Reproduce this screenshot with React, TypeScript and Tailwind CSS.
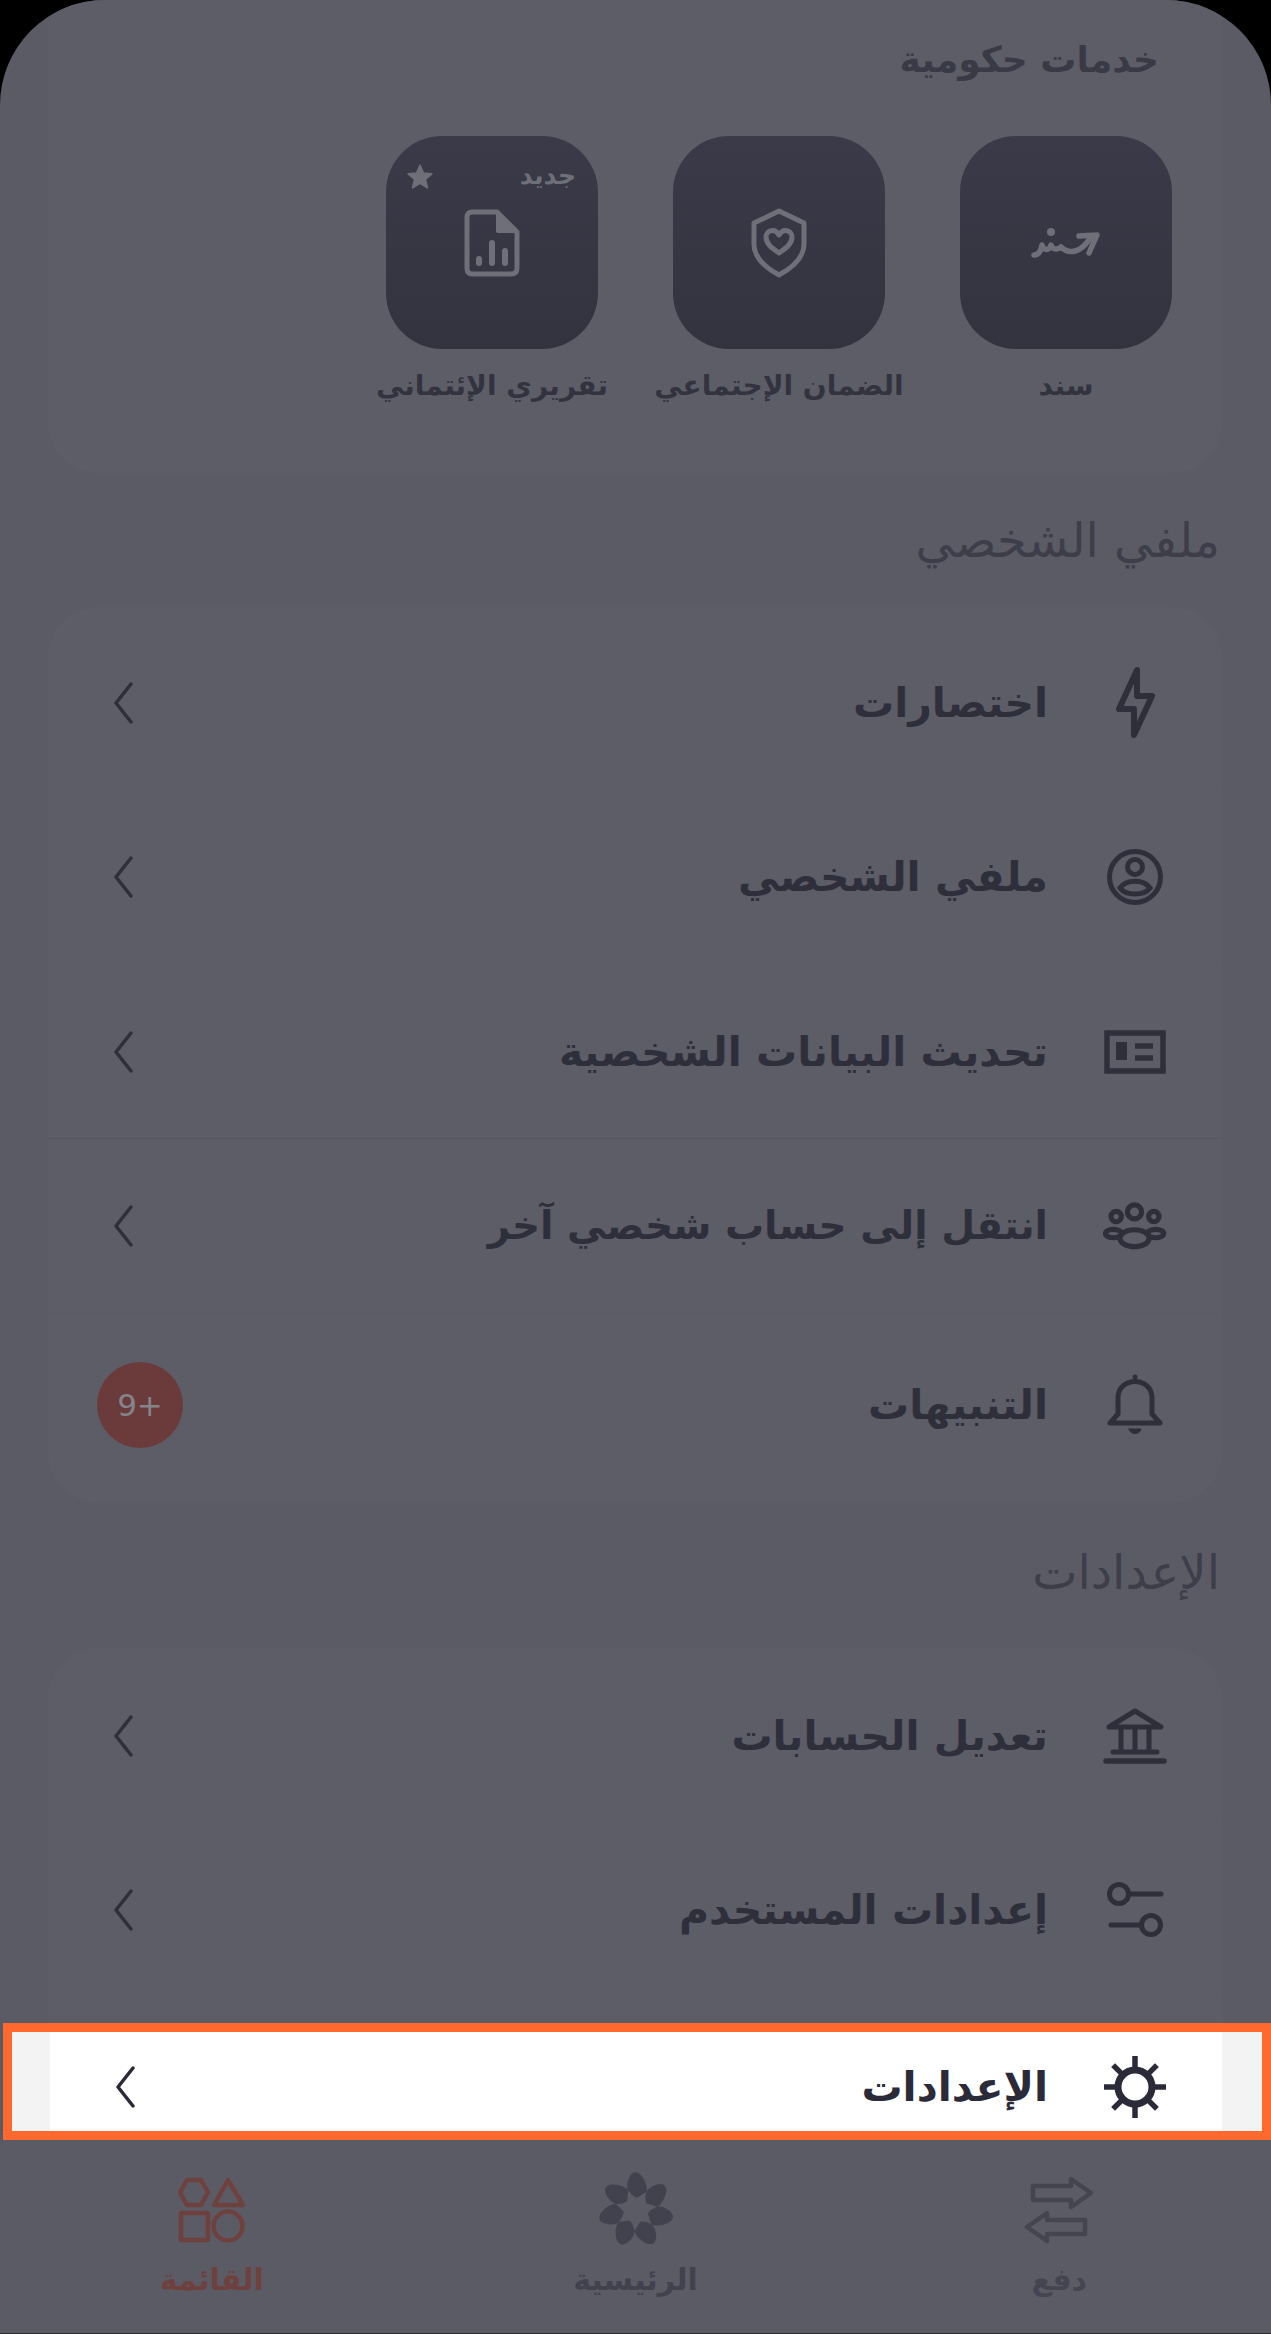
import React from "react";

const INK = "#2f2f3c";

function Bolt() {
  return (
    <svg width="41" height="73" viewBox="0 0 41 73" fill="none" stroke="currentColor" strokeWidth="6" strokeLinejoin="round" strokeLinecap="round">
      <path d="M22 4 L4 43 H19 V69 L37 30 H22 Z" />
    </svg>
  );
}
function Profile() {
  return (
    <svg width="58" height="58" viewBox="0 0 58 58" fill="none" stroke="currentColor" strokeWidth="5">
      <circle cx="29" cy="29" r="25.5" />
      <circle cx="29" cy="19" r="7.5" />
      <path d="M14 40 C20 31 38 31 44 40 C38 48 20 48 14 40 Z" />
    </svg>
  );
}
function IdCard() {
  return (
    <svg width="62" height="44" viewBox="0 0 62 44" fill="none" stroke="currentColor">
      <rect x="3" y="3" width="56" height="38" strokeWidth="5.5" />
      <rect x="12" y="12" width="11" height="18" fill="currentColor" stroke="none" />
      <path d="M31 16 H49 M31 28 H49" strokeWidth="5.5" />
    </svg>
  );
}
function People() {
  return (
    <svg width="68" height="50" viewBox="0 0 68 50" fill="none" stroke="currentColor" strokeWidth="5.5">
      <circle cx="33.5" cy="10" r="7.5" />
      <circle cx="14" cy="15" r="5.5" />
      <circle cx="54" cy="15" r="5.5" />
      <ellipse cx="11" cy="33" rx="8.5" ry="4.5" />
      <ellipse cx="56" cy="33" rx="8.5" ry="4.5" />
      <ellipse cx="33.5" cy="38" rx="15.5" ry="9" />
    </svg>
  );
}
function Bell() {
  return (
    <svg width="56" height="63" viewBox="0 0 56 63" fill="none" stroke="currentColor" strokeWidth="5" strokeLinejoin="round" strokeLinecap="round">
      <path d="M11 41 V25 C11 3 45 3 45 25 V41 L53 50 H3 Z" />
      <path d="M22 56 H34 C33 62 23 62 22 56 Z" fill="currentColor" strokeWidth="1" />
      <circle cx="28" cy="4" r="2.5" fill="currentColor" stroke="none" />
    </svg>
  );
}
function Bank() {
  return (
    <svg width="64" height="56" viewBox="0 0 64 56" fill="none" stroke="currentColor" strokeWidth="5" strokeLinejoin="round" strokeLinecap="round">
      <path d="M32 3 L58 19 H6 Z" />
      <path d="M18 22 V41 M32 22 V41 M46 22 V41" />
      <path d="M10 44 H54" />
      <path d="M3 53 H61" strokeWidth="5.5" />
    </svg>
  );
}
function Sliders() {
  return (
    <svg width="58" height="56" viewBox="0 0 58 56" fill="none" stroke="currentColor" strokeWidth="5" strokeLinecap="round">
      <circle cx="13" cy="12" r="9.5" />
      <path d="M23 12 H55" />
      <circle cx="45" cy="43" r="9.5" />
      <path d="M5 43 H35" />
    </svg>
  );
}
function Gear() {
  const spokes = [0, 45, 90, 135, 180, 225, 270, 315];
  return (
    <svg width="64" height="64" viewBox="0 0 64 64" fill="none" stroke="currentColor">
      <circle cx="32" cy="32" r="17" strokeWidth="7" />
      {spokes.map((a) => (
        <path key={a} d="M32 17 V1" strokeWidth="5.5" transform={`rotate(${a} 32 32)`} />
      ))}
    </svg>
  );
}
function Chevron() {
  return (
    <svg width="20" height="42" viewBox="0 0 20 42" fill="none" stroke="currentColor" strokeWidth="3.5" strokeLinecap="round" strokeLinejoin="round">
      <path d="M18 2 L3 21 L18 40" />
    </svg>
  );
}
function DocChart() {
  return (
    <svg width="56" height="68" viewBox="0 0 56 68" fill="none" stroke="currentColor" strokeWidth="5" strokeLinejoin="round" strokeLinecap="round">
      <path d="M8 3 H33 L53 23 V59 C53 63 51 65 47 65 H8 C5 65 3 63 3 59 V8 C3 5 5 3 8 3 Z" />
      <path d="M34 4 V22 H52" fill="currentColor" strokeWidth="4" />
      <path d="M15 50 V54 M28 34 V54 M41 42 V54" strokeWidth="6" />
    </svg>
  );
}
function Shield() {
  return (
    <svg width="58" height="70" viewBox="0 0 58 70" fill="none" stroke="currentColor" strokeWidth="5" strokeLinejoin="round">
      <path d="M29 3 L54 15 V36 C54 50 42 60 29 67 C16 60 4 50 4 36 V15 Z" />
      <path d="M29 45 C22 40 16 36 16 29 C16 22 25 20 29 27 C33 20 42 22 42 29 C42 36 36 40 29 45 Z" />
    </svg>
  );
}
function Sanad() {
  return (
    <svg width="70" height="32" viewBox="0 0 70 32" fill="none" stroke="currentColor" strokeWidth="5.5" strokeLinecap="round" strokeLinejoin="round">
      <path d="M3 28 C8 28 10 24 11 18 C13 24 18 24 20 18 C22 24 28 22 30 20 C38 28 50 26 60 10" />
      <path d="M48 9 L66 8 L58 26" />
      <circle cx="20" cy="5" r="4" fill="currentColor" stroke="none" />
    </svg>
  );
}
function Arrows() {
  return (
    <svg width="70" height="68" viewBox="0 0 70 68" fill="none" stroke="currentColor" strokeWidth="4.5" strokeLinejoin="round">
      <path d="M9 10 H47 V3 L67 17 L47 31 V24 H9 Z" />
      <path d="M61 44 H23 V37 L3 51 L23 65 V58 H61 Z" />
    </svg>
  );
}
function Flower() {
  const petals = [0, 51.4, 102.8, 154.2, 205.7, 257.1, 308.5];
  return (
    <svg width="80" height="76" viewBox="0 0 80 76" fill="currentColor" stroke="currentColor" strokeWidth="3" strokeLinejoin="round">
      {petals.map((a) => (
        <path key={a} d="M38 2 C42 1 45 5 47 9 C49 13 50 16 49 19 L41 24 C38 23 35 20 33 17 C32 11 34 5 38 2 Z" transform={`rotate(${a} 40 38)`} />
      ))}
    </svg>
  );
}
function Shapes() {
  return (
    <svg width="68" height="66" viewBox="0 0 68 66" fill="none" stroke="currentColor" strokeWidth="4.5" strokeLinejoin="round">
      <path d="M9 3 H23 L30 15.5 L23 28 H9 L2 15.5 Z" />
      <path d="M50 3 L65 28 H36 Z" />
      <rect x="3" y="36" width="27" height="27" />
      <circle cx="50" cy="49" r="14.5" />
    </svg>
  );
}
function Star() {
  return (
    <svg width="28" height="27" viewBox="0 0 24 24" fill="currentColor" stroke="currentColor" strokeWidth="1.5" strokeLinejoin="round">
      <path d="M12 2 L15 9 L22.5 9.6 L16.8 14.6 L18.6 22 L12 18 L5.4 22 L7.2 14.6 L1.5 9.6 L9 9 Z" />
    </svg>
  );
}

function Tile({ label, icon, badge }: { label: string; icon: React.ReactNode; badge?: boolean }) {
  return (
    <div className="flex w-[212px] flex-col items-center">
      <div className="relative flex h-[213px] w-[212px] items-center justify-center rounded-[56px] bg-gradient-to-b from-[#3a3a48] to-[#333340] text-[#6f6f79]">
        {badge && (
          <>
            <span className="absolute right-[22px] top-[23px] text-[25px] font-bold leading-[34px]">جديد</span>
            <span className="absolute left-[20px] top-[27px]"><Star /></span>
          </>
        )}
        {icon}
      </div>
      <div className="mt-[19px] whitespace-nowrap text-[28px] font-bold leading-[36px] text-[#33333f]">{label}</div>
    </div>
  );
}

function Row({ label, icon, end, line = "border-[#5b5b66]", size = "text-[41px]" }: { label: string; icon: React.ReactNode; end?: React.ReactNode; line?: string; size?: string }) {
  return (
    <div className={`flex h-[174.5px] items-center border-b pl-[65px] pr-[55px] pt-[2px] ${line}`} style={{ color: INK }}>
      <div className="flex w-[64px] shrink-0 justify-center">{icon}</div>
      <div className={`mr-[55px] whitespace-nowrap font-bold leading-[50px] ${size}`}>{label}</div>
      <div className="mr-auto">{end ?? <Chevron />}</div>
    </div>
  );
}

function Tab({ label, icon, color }: { label: string; icon: React.ReactNode; color: string }) {
  return (
    <div className={`flex flex-col items-center ${color}`}>
      <div className="flex h-[76px] items-center">{icon}</div>
      <div className="mt-[14px] text-[30px] font-bold leading-[36px]">{label}</div>
    </div>
  );
}

export default function App() {
  return (
    <div className="h-[2334px] w-[1271px] overflow-hidden bg-black font-['DejaVu_Sans',sans-serif]" dir="rtl">
      <div className="flex h-full flex-col overflow-hidden rounded-t-[105px] border-b border-[#2a2a33] bg-[#5b5b66]">
        <div className="h-[2140px] shrink-0 pl-[48px] pr-[49px]">
          <section className="h-[473px] rounded-b-[50px] bg-[#5d5d68] pt-[30px]">
            <h2 className="pr-[63px] text-[36px] font-bold leading-[60px] text-[#3a3a47]">خدمات حكومية</h2>
            <div className="mt-[46px] flex gap-[75px] pr-[50px]">
              <Tile label="سند" icon={<Sanad />} />
              <Tile label="الضمان الإجتماعي" icon={<Shield />} />
              <Tile label="تقريري الإئتماني" icon={<DocChart />} badge />
            </div>
          </section>
          <h2 className="flex h-[134px] items-center pr-[2px] text-[48px] font-normal text-[#3e3e4a]">ملفي الشخصي</h2>
          <section className="h-[896px] rounded-[50px] bg-[#5d5d68] pt-[8px]">
            <Row label="اختصارات" icon={<Bolt />} />
            <Row label="ملفي الشخصي" icon={<Profile />} />
            <Row label="تحديث البيانات الشخصية" icon={<IdCard />} line="border-[#565661]" />
            <Row label="انتقل إلى حساب شخصي آخر" icon={<People />} size="text-[39px]" />
            <div className="pt-[4px]">
              <Row
                label="التنبيهات"
                icon={<Bell />}
                line="border-transparent"
                end={
                  <div dir="ltr" className="-ml-[16px] flex h-[86px] w-[86px] items-center justify-center rounded-full bg-[#6b3b3b] text-[31px] font-normal text-[#84848c]">
                    9+
                  </div>
                }
              />
            </div>
          </section>
          <h2 className="flex h-[145px] items-center pb-[8px] pr-[2px] text-[48px] font-normal text-[#3e3e4a]">الإعدادات</h2>
          <section className="rounded-t-[50px] bg-[#5d5d68]">
            <Row label="تعديل الحسابات" icon={<Bank />} />
            <Row label="إعدادات المستخدم" icon={<Sliders />} />
            <div className="-ml-[45px] -mr-[49px] mt-[26px] border-[9px] border-[#ff692d] bg-[#f3f3f3] pl-[38px] pr-[40px]">
              <div className="flex h-[99px] items-center bg-white pl-[65px] pr-[55px] pt-[10px]" style={{ color: "#2a2a38" }}>
                <div className="flex w-[64px] shrink-0 justify-center"><Gear /></div>
                <div className="mr-[55px] text-[41px] font-bold leading-[50px]">الإعدادات</div>
                <div className="mr-auto"><Chevron /></div>
              </div>
            </div>
          </section>
        </div>
        <nav className="grid flex-1 grid-cols-3 pt-[32px]">
          <Tab label="دفع" icon={<Arrows />} color="text-[#454551]" />
          <Tab label="الرئيسية" icon={<Flower />} color="text-[#42424f]" />
          <Tab label="القائمة" icon={<Shapes />} color="text-[#6e413f]" />
        </nav>
      </div>
    </div>
  );
}
